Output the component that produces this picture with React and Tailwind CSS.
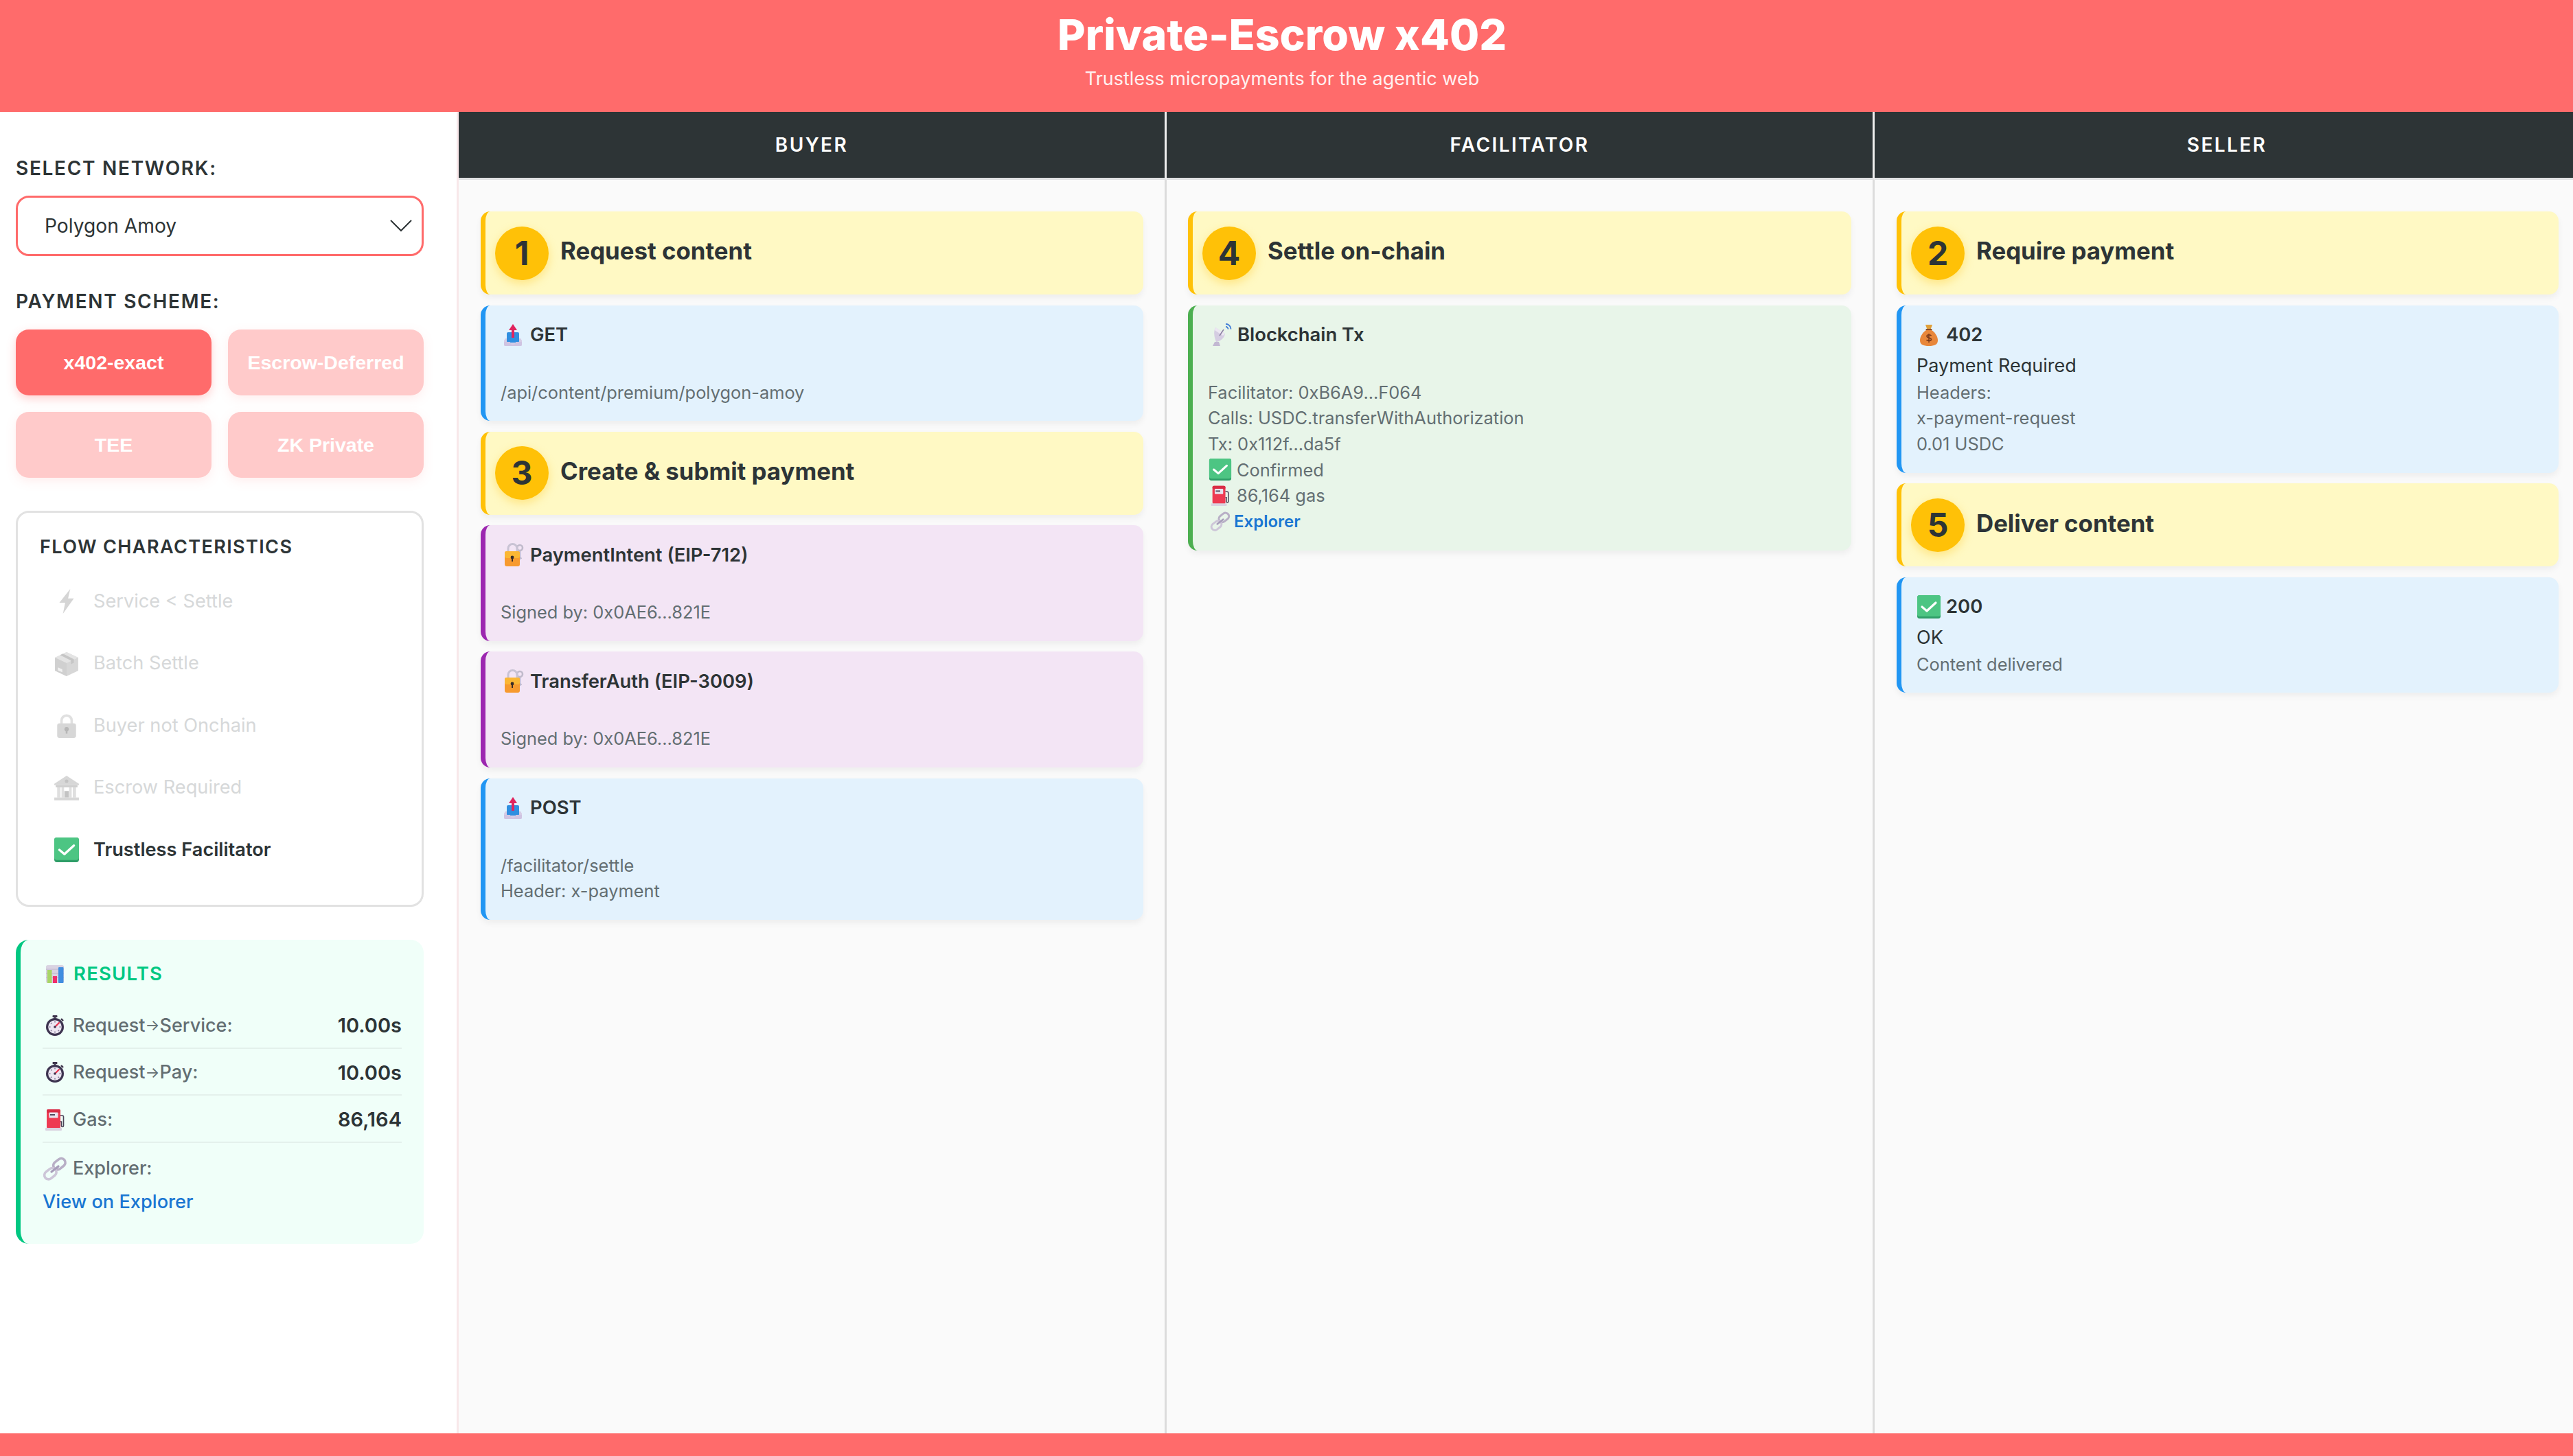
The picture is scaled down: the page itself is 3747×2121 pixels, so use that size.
import { useState } from "react";

const Emoji = ({ name, className = "" }) => {
    const shapes = {
        bolt: (
            <path d="M23 1 8 20h8l-3 15 15-21h-8z" fill="#8a8a8a" />
        ),
        box: (
            <>
                <path d="M18 2 34 9.500v18L18 35 2 27.500v-18z" fill="#8e8e8e" />
                <path d="M18 2 34 9.500 18 17 2 9.500z" fill="#b4b4b4" />
                <path d="M18 17v18L2 27.500v-18z" fill="#7c7c7c" />
                <path d="m9 6 15 7.500v5l4-2v-5L13 4z" fill="#5f5f5f" />
                <path d="m6 23 6 2.500v4l-6-2.500z" fill="#d8d8d8" />
            </>
        ),
        lock: (
            <>
                <path d="M11 17v-6a7 7 0 0 1 14 0v6" fill="none" stroke="#a8a8a8" strokeWidth="3.400" />
                <rect x="5" y="15" width="26" height="20" rx="3" fill="#8f8f8f" />
                <circle cx="18" cy="23" r="3" fill="#333" />
                <rect x="16.800" y="23" width="2.400" height="6" fill="#333" />
            </>
        ),
        bank: (
            <>
                <path d="M18 1 35 12v2H1v-2z" fill="#8f8f8f" />
                <circle cx="18" cy="8.500" r="2.400" fill="#555" />
                <rect x="3" y="14" width="30" height="3" fill="#777" />
                <rect x="5" y="17" width="4.500" height="14" fill="#a4a4a4" />
                <rect x="26.500" y="17" width="4.500" height="14" fill="#a4a4a4" />
                <rect x="11" y="17" width="3.500" height="14" fill="#a4a4a4" />
                <rect x="21.500" y="17" width="3.500" height="14" fill="#a4a4a4" />
                <rect x="15" y="22" width="6" height="9" fill="#555" />
                <rect x="1" y="31" width="34" height="4" fill="#8e8e8e" />
            </>
        ),
        check: (
            <>
                <rect x="1" y="1" width="34" height="34" rx="3.500" fill="#2f9e68" />
                <rect x="1" y="1" width="34" height="31" rx="3.500" fill="#4dc583" />
                <path d="m8 18 7 6 13-12" fill="none" stroke="#fff" strokeWidth="3.200" strokeLinecap="round" strokeLinejoin="round" />
            </>
        ),
        chart: (
            <>
                <rect x="5" y="5" width="26" height="26" rx="2.500" fill="#d9d3e2" />
                <path d="M5 11h26M5 17h26M5 23h26" stroke="#bdb5ca" strokeWidth="1" />
                <rect x="7" y="12" width="6.500" height="19" fill="#a8d666" />
                <rect x="15" y="21" width="6" height="10" fill="#ef2f6b" />
                <rect x="23" y="8" width="7.500" height="23" rx="1" fill="#3f8ee0" />
            </>
        ),
        watch: (
            <>
                <rect x="14.500" y="3" width="7" height="3" rx="1" fill="#3a3148" />
                <rect x="16.500" y="5" width="3" height="4" fill="#4a4058" />
                <path d="m27 8 3 3" stroke="#3a3148" strokeWidth="2.400" />
                <circle cx="18" cy="20" r="13" fill="#3d3450" />
                <circle cx="18" cy="20" r="9.800" fill="#ece6f2" />
                <path d="M18 11.500v2M18 26.500v2M9.500 20h2M24.500 20h2M12 14l1.400 1.400M24 26l-1.400-1.400M12 26l1.400-1.400" stroke="#8a7d9c" strokeWidth="1.600" />
                <path d="m18 20 6-6" stroke="#e8314f" strokeWidth="2.200" strokeLinecap="round" />
                <circle cx="18" cy="20" r="1.800" fill="#3d3450" />
            </>
        ),
        fuel: (
            <>
                <rect x="6" y="3" width="20" height="28" rx="2.500" fill="#ee3a52" />
                <rect x="6" y="3" width="20" height="5" rx="2" fill="#d92c45" />
                <rect x="9.500" y="7.500" width="13" height="8" rx="1" fill="#e8e4ee" />
                <rect x="11" y="10" width="7" height="2" fill="#50485e" />
                <rect x="4" y="30" width="24" height="4" rx="1" fill="#d9d3e0" />
                <path d="M26 12h2.500a2 2 0 0 1 2 2v13a1.500 1.500 0 0 1-3 0v-6H26" fill="none" stroke="#4b4458" strokeWidth="1.600" />
            </>
        ),
        link: (
            <>
                <rect x="15" y="5" width="19" height="12" rx="6" transform="rotate(-38 24 11)" fill="none" stroke="#b8afc6" strokeWidth="3.600" />
                <rect x="2" y="19" width="19" height="12" rx="6" transform="rotate(-38 11 25)" fill="none" stroke="#cdc6d8" strokeWidth="3.600" />
                <path d="m13 22 10-8" stroke="#a79dba" strokeWidth="3.200" strokeLinecap="round" />
            </>
        ),
        outbox: (
            <>
                <path d="M7 23h22l2 3v6a2 2 0 0 1-2 2H7a2 2 0 0 1-2-2v-6z" fill="#d6cde6" />
                <rect x="9" y="14" width="18" height="15" rx="2" fill="#2f8fe0" />
                <path d="M5 28h9a4 4 0 0 0 8 0h9v4a2 2 0 0 1-2 2H7a2 2 0 0 1-2-2z" fill="#cfc4e2" />
                <path d="M18 2 24 11h-4v11h-4V11h-4z" fill="#e0245e" />
            </>
        ),
        lockKey: (
            <>
                <circle cx="28" cy="8" r="4" fill="none" stroke="#c0bacb" strokeWidth="2.600" />
                <path d="M28 12v12l2.500-1.500" fill="none" stroke="#c0bacb" strokeWidth="2.600" />
                <path d="M11 15V9a6.500 6.500 0 0 1 13 0v6" fill="none" stroke="#c9c3d4" strokeWidth="3" />
                <rect x="6" y="13" width="22" height="22" rx="3" fill="#f79a2e" />
                <rect x="6" y="13" width="22" height="10" rx="3" fill="#fbb734" />
                <circle cx="17" cy="22" r="2.400" fill="#3a2c28" />
                <rect x="16" y="22" width="2" height="6" fill="#3a2c28" />
            </>
        ),
        satellite: (
            <>
                <path d="M11 7 25 16c-1 6-6 11-13 12C9 21 8 13 11 7z" fill="#d5cde2" />
                <path d="M11 7 25 16l-3 3L10 11z" fill="#ece7f2" />
                <path d="m17 19 6-9" stroke="#8f84a5" strokeWidth="1.600" />
                <path d="M26 6a3.500 3.500 0 0 1 3.500 3.500M26 2a7.500 7.500 0 0 1 7.500 7.500" fill="none" stroke="#3e7bd6" strokeWidth="1.800" />
                <path d="M10 28h6l2 6H7z" fill="#c2b8d2" />
            </>
        ),
        bag: (
            <>
                <path d="M13 3h10l-2.500 7h-5z" fill="#e0a03a" />
                <rect x="13.500" y="9" width="9" height="2.500" rx="1" fill="#8a4b26" />
                <path d="M14 11h8c6 4 9 10 9 15 0 6-5 8-13 8S5 32 5 26c0-5 3-11 9-15z" fill="#e8873a" />
                <path d="M21.500 19c-1-1.500-6-2-6.500.5-.5 3 6.500 2 6.500 5 0 2.500-5.500 2.500-7 .5M18 16v13" fill="none" stroke="#7a3a1a" strokeWidth="1.500" />
            </>
        ),
    };

    return (
        <svg viewBox="0 0 36 36" className={className} aria-hidden="true">
            {shapes[name]}
        </svg>
    );
};

const StepHead = ({ num, title }) => (
    <div className="flex h-[121px] items-center rounded-[14px] border-l-[7px] border-[#ffc107] bg-[#fff9c4] pl-[14px] shadow-[0_5px_10px_rgba(0,0,0,0.05)]">
        <div className="flex h-[78px] w-[78px] shrink-0 items-center justify-center rounded-full bg-[#ffc107] text-[48px] font-bold text-[#2d3436] shadow-[0_5px_14px_rgba(255,193,7,0.35)]">
            {num}
        </div>
        <div className="ml-[17px] -mt-[6px] text-[34.800px] font-bold text-[#2d3436]">{title}</div>
    </div>
);

const Card = ({ tone, emoji, title, sub, children }) => {
    const tones = {
        blue: "border-[#2196f3] bg-[#e3f2fd]",
        purple: "border-[#9c27b0] bg-[#f3e5f5]",
        green: "border-[#4caf50] bg-[#e8f5e9]",
    };
    return (
        <div className={`rounded-[14px] border-l-[7px] pt-[24px] pr-[22px] pb-[23px] pl-[22px] shadow-[0_5px_10px_rgba(0,0,0,0.05)] ${tones[tone]}`}>
            <div className="flex h-[38px] items-center text-[27.400px] font-semibold text-[#2d3436]">
                <Emoji name={emoji} className="mr-[7px] h-[36px] w-[36px] shrink-0" />
                {title}
            </div>
            <div className="h-[46px] pt-[7px] text-[27px] leading-[38px] text-[#2d3436]">{sub}</div>
            <div className="text-[25.400px] leading-[37.700px] text-[#636e72]">{children}</div>
        </div>
    );
};

const Line = ({ emoji, children }) => (
    <div className="flex items-center">
        <Emoji name={emoji} className="mr-[6px] h-[34px] w-[36px] shrink-0" />
        {children}
    </div>
);

const ResultRow = ({ emoji, label, value }) => (
    <div className="flex h-[68.500px] items-center justify-between border-b-2 border-[#e4f1ec] pt-[3px]">
        <div className="flex items-center text-[27px] font-medium text-[#636e72]">
            <Emoji name={emoji} className="mr-[8px] h-[36px] w-[36px] shrink-0" />
            {label}
        </div>
        <div className="text-[29px] font-semibold text-[#2d3436]">{value}</div>
    </div>
);

const Arrow = () => <span className="text-[22px] font-normal">→</span>;

const schemes = ["x402-exact", "Escrow-Deferred", "TEE", "ZK Private"];

const flags = [
    { emoji: "bolt", label: "Service < Settle" },
    { emoji: "box", label: "Batch Settle" },
    { emoji: "lock", label: "Buyer not Onchain" },
    { emoji: "bank", label: "Escrow Required" },
    { emoji: "check", label: "Trustless Facilitator", active: true },
];

const ColumnHead = ({ children, className = "" }) => (
    <div className={`flex h-[99px] shrink-0 items-center justify-center border-b-[3px] border-b-[#dfe1e2] bg-[#2d3436] text-[28px] font-semibold tracking-[2.400px] text-white ${className}`}>
        {children}
    </div>
);

export default function App() {
    const [scheme] = useState("x402-exact");

    return (
        <div className="flex h-[2121px] w-[3747px] flex-col overflow-hidden bg-white font-['Inter',sans-serif] text-[#2d3436]">
            <header className="h-[163px] shrink-0 bg-[#ff6b6b] pt-[15px] pr-[13px] text-center text-white">
                <h1 className="text-[62.500px] leading-[70px] font-extrabold">Private-Escrow x402</h1>
                <p className="mt-[13px] text-[27px] leading-[34px] text-white/90">Trustless micropayments for the agentic web</p>
            </header>

            <div className="flex min-h-0 flex-1">
                <aside className="w-[668px] shrink-0 border-r-[3px] border-[#f8e8ea] pt-[63px] pr-[48px] pl-[23px]">
                    <div className="mb-[21px] text-[28px] leading-[38px] font-semibold tracking-[1.700px]">SELECT NETWORK:</div>
                    <div className="flex h-[88px] items-center justify-between rounded-[19px] border-[3px] border-[#ff6b6b] pr-[14px] pl-[39px] text-[28.200px]">
                        Polygon Amoy
                        <svg viewBox="0 0 32 18" className="h-[18px] w-[32px]" fill="none" stroke="#2d3436" strokeWidth="2">
                            <path d="m1 1 15 15L31 1" />
                        </svg>
                    </div>

                    <div className="mt-[47px] mb-[22px] text-[28px] leading-[38px] font-semibold tracking-[1.700px]">PAYMENT SCHEME:</div>
                    <div className="grid grid-cols-2 gap-[24px]">
                        {schemes.map((s) => (
                            <button
                                key={s}
                                className={`h-[96px] rounded-[19px] bg-[#ff6b6b] font-['Liberation_Sans',Arial,sans-serif] text-[28.500px] font-bold text-white shadow-[0_5px_14px_rgba(255,107,107,0.3)] ${s === scheme ? "" : "opacity-35"}`}
                            >
                                {s}
                            </button>
                        ))}
                    </div>

                    <div className="mt-[48px] h-[577px] rounded-[19px] border-[3px] border-[#e2e2e2] pt-[31px] pr-[31px] pl-[32px]">
                        <div className="mb-[15px] text-[27px] leading-[38px] font-semibold tracking-[1.400px]">FLOW CHARACTERISTICS</div>
                        {flags.map((f) => (
                            <div key={f.label} className="flex h-[90.500px] items-center pl-[20px] text-[27.200px]">
                                <Emoji name={f.emoji} className={`mr-[20px] h-[38px] w-[38px] shrink-0 ${f.active ? "" : "opacity-35"}`} />
                                <span className={f.active ? "font-semibold text-[#2d3436]" : "text-[#d6d8d9]"}>{f.label}</span>
                            </div>
                        ))}
                    </div>

                    <div className="mt-[48px] h-[443px] rounded-[19px] border-l-[7px] border-[#00c781] bg-[#f0fff9] pt-[31px] pr-[32px] pl-[32px]">
                        <div className="mb-[21px] flex h-[38px] items-center text-[27.500px] font-semibold tracking-[1.200px] text-[#00c781]">
                            <Emoji name="chart" className="mr-[9px] h-[36px] w-[36px] shrink-0" />
                            RESULTS
                        </div>
                        <ResultRow emoji="watch" label={<>Request<Arrow />Service:</>} value="10.00s" />
                        <ResultRow emoji="watch" label={<>Request<Arrow />Pay:</>} value="10.00s" />
                        <ResultRow emoji="fuel" label="Gas:" value="86,164" />
                        <div className="mt-[19px] flex h-[38px] items-center text-[27px] font-medium text-[#636e72]">
                            <Emoji name="link" className="mr-[8px] h-[36px] w-[36px] shrink-0" />
                            Explorer:
                        </div>
                        <a className="mt-[10px] block text-[27.200px] leading-[38px] font-medium text-[#1976d2]">View on Explorer</a>
                    </div>
                </aside>

                <section className="flex w-[1031px] shrink-0 flex-col bg-[#fafafa]">
                    <ColumnHead className="border-r-[3px] border-r-[#eeeeee]">BUYER</ColumnHead>
                    <div className="flex flex-1 flex-col gap-[15.500px] border-r-[3px] border-[#dcdcdc] pt-[46px] pr-[31px] pl-[32px]">
                        <StepHead num="1" title="Request content" />
                        <Card tone="blue" emoji="outbox" title="GET">/api/content/premium/polygon-amoy</Card>
                        <StepHead num="3" title="Create & submit payment" />
                        <Card tone="purple" emoji="lockKey" title="PaymentIntent (EIP-712)">Signed by: 0x0AE6...821E</Card>
                        <Card tone="purple" emoji="lockKey" title="TransferAuth (EIP-3009)">Signed by: 0x0AE6...821E</Card>
                        <Card tone="blue" emoji="outbox" title="POST">
                            /facilitator/settle
                            <br />
                            Header: x-payment
                        </Card>
                    </div>
                </section>

                <section className="flex w-[1031px] shrink-0 flex-col bg-[#fafafa]">
                    <ColumnHead className="border-r-[3px] border-r-[#eeeeee]">FACILITATOR</ColumnHead>
                    <div className="flex flex-1 flex-col gap-[15.500px] border-r-[3px] border-[#dcdcdc] pt-[46px] pr-[31px] pl-[31px]">
                        <StepHead num="4" title="Settle on-chain" />
                        <Card tone="green" emoji="satellite" title="Blockchain Tx">
                            <div>Facilitator: 0xB6A9...F064</div>
                            <div>Calls: USDC.transferWithAuthorization</div>
                            <div>Tx: 0x112f...da5f</div>
                            <Line emoji="check">Confirmed</Line>
                            <Line emoji="fuel">86,164 gas</Line>
                            <div className="flex h-[37.700px] items-center">
                                <Emoji name="link" className="mr-[2px] h-[30px] w-[36px] shrink-0" />
                                <a className="text-[24px] font-semibold text-[#1976d2]">Explorer</a>
                            </div>
                        </Card>
                    </div>
                </section>

                <section className="flex min-w-0 flex-1 flex-col bg-[#fafafa]">
                    <ColumnHead className="pl-[9px]">SELLER</ColumnHead>
                    <div className="flex flex-col gap-[15.500px] pt-[46px] pr-[21px] pl-[32px]">
                        <StepHead num="2" title="Require payment" />
                        <Card tone="blue" emoji="bag" title="402" sub="Payment Required">
                            Headers:
                            <br />
                            x-payment-request
                            <br />
                            0.01 USDC
                        </Card>
                        <StepHead num="5" title="Deliver content" />
                        <Card tone="blue" emoji="check" title="200" sub="OK">Content delivered</Card>
                    </div>
                </section>
            </div>

            <footer className="h-[33px] shrink-0 bg-[#ff6b6b]" />
        </div>
    );
}
